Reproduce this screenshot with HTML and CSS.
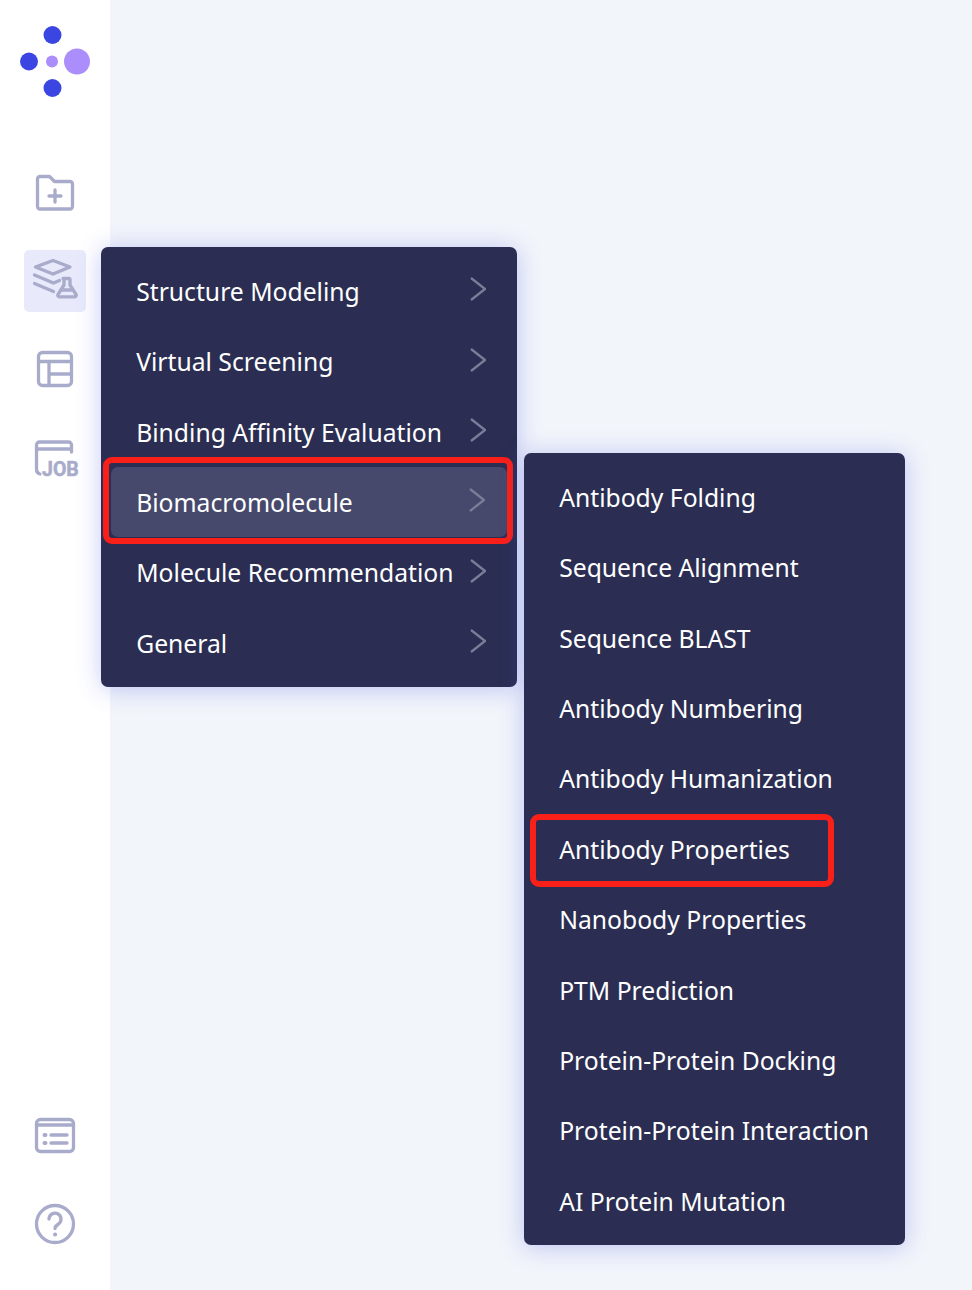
FILE: index.html
```html
<!DOCTYPE html>
<html lang="en">
<head>
  <meta charset="UTF-8">
  <title>Workbench</title>
  <link rel="stylesheet" href="styles.css">
</head>
<body>
  <aside class="sidebar">
    <svg class="logo" width="110" height="110" viewBox="0 0 110 110">
      <circle cx="52.5" cy="35" r="9" fill="#3b46e2"/>
      <circle cx="29" cy="61.5" r="9" fill="#3b46e2"/>
      <circle cx="52.5" cy="88" r="9" fill="#3b46e2"/>
      <circle cx="52" cy="61.5" r="6" fill="#ab8dfb"/>
      <circle cx="77" cy="61.5" r="13" fill="#ab8dfb"/>
    </svg>

    <nav class="nav">
      <div class="tile">
        <svg width="62" height="62" viewBox="0 0 62 62" class="icon">
          <path d="M13.500 17a2.500 2.500 0 0 1 2.500-2.500h9.500l5 5h15.500a2.500 2.500 0 0 1 2.500 2.500v22.500a2.500 2.500 0 0 1-2.500 2.500h-30a2.500 2.500 0 0 1-2.500-2.500z"/>
          <path d="M31 28v12M25 34h12"/>
        </svg>
      </div>
      <div class="tile active">
        <svg width="62" height="62" viewBox="0 0 62 62" class="icon">
          <path d="M29 10.500l17 6.500-17 7-17.500-7z"/>
          <path d="M10.500 25l19 8 6-2.500M10.500 33.500l19 8"/>
          <path d="M39 28.500h6.500M40 29v6l-6 9.500a1.500 1.500 0 0 0 1.300 2.300h15.400a1.500 1.500 0 0 0 1.300-2.300l-6-9.500v-6M36.500 40h12"/>
        </svg>
      </div>
      <div class="tile">
        <svg width="62" height="62" viewBox="0 0 62 62" class="icon">
          <rect x="14.500" y="14.500" width="33" height="33" rx="4"/>
          <path d="M14.500 23.500h33M25 23.500v24M25 36h22.500"/>
        </svg>
      </div>
      <div class="tile">
        <svg width="62" height="62" viewBox="0 0 62 62" class="icon">
          <path d="M12.500 43v-24a3 3 0 0 1 3-3h29a3 3 0 0 1 3 3v7M12.500 23h35M12.500 43c0 3 1 4.500 3.500 5"/>
          <text x="18" y="50" class="job">JOB</text>
        </svg>
      </div>
    </nav>

    <nav class="nav bottom">
      <div class="tile">
        <svg width="62" height="62" viewBox="0 0 62 62" class="icon">
          <rect x="12.500" y="14.500" width="37" height="32" rx="4"/>
          <path d="M12.500 20h37M27 30h16M27 38h16"/>
          <path class="dot" d="M20.500 30h1M20.500 38h1"/>
        </svg>
      </div>
      <div class="tile">
        <svg width="62" height="62" viewBox="0 0 62 62" class="icon">
          <circle cx="31" cy="31" r="18.500"/>
          <path d="M25 26a6 6 0 1 1 9.500 5c-2.300 1.500-3.500 2.500-3.500 4.500"/>
          <path class="dot" d="M31 41.500h.1"/>
        </svg>
      </div>
    </nav>
  </aside>

  <ul class="menu menu-main">
    <li class="item">Structure Modeling<svg class="chev" width="16" height="24" viewBox="0 0 16 24"><path d="M1 1l14 11-14 11"/></svg></li>
    <li class="item">Virtual Screening<svg class="chev" width="16" height="24" viewBox="0 0 16 24"><path d="M1 1l14 11-14 11"/></svg></li>
    <li class="item">Binding Affinity Evaluation<svg class="chev" width="16" height="24" viewBox="0 0 16 24"><path d="M1 1l14 11-14 11"/></svg></li>
    <li class="item current">Biomacromolecule<svg class="chev" width="16" height="24" viewBox="0 0 16 24"><path d="M1 1l14 11-14 11"/></svg><span class="mark mark-wide"></span></li>
    <li class="item">Molecule Recommendation<svg class="chev" width="16" height="24" viewBox="0 0 16 24"><path d="M1 1l14 11-14 11"/></svg></li>
    <li class="item">General<svg class="chev" width="16" height="24" viewBox="0 0 16 24"><path d="M1 1l14 11-14 11"/></svg></li>
  </ul>

  <ul class="menu menu-sub">
    <li class="item">Antibody Folding</li>
    <li class="item">Sequence Alignment</li>
    <li class="item">Sequence BLAST</li>
    <li class="item">Antibody Numbering</li>
    <li class="item">Antibody Humanization</li>
    <li class="item">Antibody Properties<span class="mark mark-label"></span></li>
    <li class="item">Nanobody Properties</li>
    <li class="item">PTM Prediction</li>
    <li class="item">Protein-Protein Docking</li>
    <li class="item">Protein-Protein Interaction</li>
    <li class="item">AI Protein Mutation</li>
  </ul>
</body>
</html>
```

FILE: styles.css
```css
html, body {
  margin: 0;
  padding: 0;
  height: 100%;
}
body {
  background-color: #f2f5fa;
  font-family: "Noto Sans", "Open Sans", sans-serif;
  overflow: hidden;
  position: relative;
}
.sidebar {
  width: 110px;
  height: 100%;
  box-sizing: border-box;
  background-color: #fff;
  display: flex;
  flex-direction: column;
  padding-bottom: 35px;
}
.logo {
  display: block;
  flex: none;
  margin-bottom: 52px;
}
.nav {
  display: flex;
  flex-direction: column;
  align-items: flex-start;
  gap: 26px;
  padding-left: 24px;
}
.nav.bottom {
  margin-top: auto;
}
.tile {
  width: 62px;
  height: 62px;
  border-radius: 5px;
}
.tile.active {
  background-color: #e8eafb;
}
.icon {
  display: block;
  fill: none;
  stroke: #a9abcb;
  stroke-width: 3.3;
  stroke-linecap: round;
  stroke-linejoin: round;
}
.icon .dot {
  stroke-width: 4;
}
.job {
  font-family: Roboto, sans-serif;
  font-size: 19.500px;
  font-weight: 700;
  fill: #a9abcb;
  stroke: #a9abcb;
  stroke-width: 0.5;
}

/* popup menus */
.menu {
  position: absolute;
  margin: 0;
  padding: 8.8px;
  list-style: none;
  background-color: #2b2e52;
  border-radius: 7px;
  box-shadow: 0 2px 24px rgba(70, 80, 230, 0.3);
  box-sizing: border-box;
}
.menu-main {
  left: 101px;
  top: 247px;
  width: 416px;
}
.menu-sub {
  left: 524px;
  top: 453px;
  width: 381px;
}
.item {
  position: relative;
  height: 70.4px;
  line-height: 71px;
  padding-left: 26.400px;
  border-radius: 7px;
  color: #fff;
  font-size: 24.700px;
  white-space: nowrap;
}
.item.current {
  background-color: #46496c;
  margin: 0 0.800px;
  padding-left: 25.600px;
}
.chev {
  position: absolute;
  right: 22px;
  top: 21.500px;
  fill: none;
  stroke: #7b7d98;
  stroke-width: 2.3;
}
/* red annotation frames */
.mark {
  position: absolute;
  box-sizing: border-box;
  border: 6px solid #f9201a;
  border-radius: 9px;
}
.mark-wide {
  left: -8px;
  right: -6px;
  top: -10px;
  bottom: -7px;
}
.mark-label {
  left: -3px;
  width: 304px;
  top: 0;
  height: 73px;
}
```
